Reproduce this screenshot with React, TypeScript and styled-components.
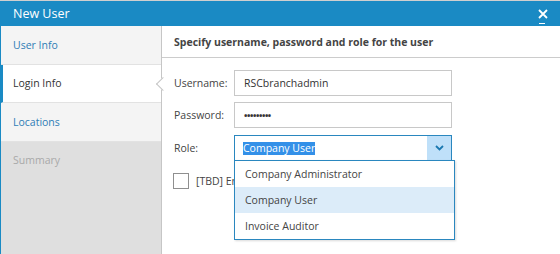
import React from "react";
import styled, { createGlobalStyle } from "styled-components";

const GlobalStyle = createGlobalStyle`
  body {
    margin: 0;
    font-family: "Open Sans", "Noto Sans", sans-serif;
    background: #ffffff;
  }
`;

const blue = "#1a8ac4";

const Dialog = styled.div`
  width: 560px;
  height: 254px;
  display: flex;
  flex-direction: column;
  border-top: 1px solid #cfcfcf;
  box-sizing: border-box;
  overflow: hidden;
`;

const TitleBar = styled.div`
  height: 25px;
  flex: none;
  background: ${blue};
  display: flex;
  align-items: center;
  justify-content: space-between;
  padding: 0 11px 0 13px;
  color: #fff;
  font-size: 12.5px;
`;

const CloseButton = styled.div`
  position: relative;
  width: 12px;
  height: 24px;
  display: flex;
  align-items: center;
  justify-content: center;
  cursor: pointer;

  &::after {
    content: "";
    position: absolute;
    left: 2px;
    bottom: 2px;
    width: 6px;
    height: 1px;
    background: #fff;
  }
`;

const Body = styled.div`
  flex: 1;
  display: flex;
  border-left: 1px solid ${blue};
`;

const Sidebar = styled.div`
  width: 160px;
  flex: none;
  background: #dfdfdf;
  border-right: 1px solid #c6c6c6;
`;

const NavItem = styled.div<{ $state: "normal" | "active" | "disabled" }>`
  height: 38.5px;
  display: flex;
  align-items: center;
  padding-left: ${(p) => (p.$state === "active" ? "10px" : "12px")};
  font-size: 10.5px;
  box-sizing: border-box;
  border-left: ${(p) => (p.$state === "active" ? `2px solid ${blue}` : "none")};
  border-bottom: 1px solid ${(p) => (p.$state === "disabled" ? "#dfdfdf" : "#e2e2e2")};
  background: ${(p) =>
    p.$state === "active" ? "#ffffff" : p.$state === "disabled" ? "#dfdfdf" : "#f4f4f4"};
  color: ${(p) =>
    p.$state === "active" ? "#333333" : p.$state === "disabled" ? "#a9a9a9" : "#2f7db6"};
`;

const Content = styled.div`
  flex: 1;
  position: relative;
  background: #fff;
`;

const Notch = styled.div`
  position: absolute;
  left: -4px;
  top: 53px;
  width: 9px;
  height: 9px;
  background: #fff;
  border-left: 1px solid #c6c6c6;
  border-bottom: 1px solid #c6c6c6;
  transform: rotate(45deg);
`;

const Header = styled.div`
  height: 31px;
  border-bottom: 1px solid #cccccc;
  display: flex;
  align-items: center;
  padding-left: 12px;
  font-size: 10.5px;
  font-weight: 700;
  color: #444;
`;

const Form = styled.div`
  padding: 12px 0 0 12px;
  display: grid;
  grid-template-columns: 60px 218px;
  row-gap: 6px;
  align-items: center;
`;

const Label = styled.div`
  font-size: 10.5px;
  color: #444;
`;

const TextBox = styled.div`
  height: 26px;
  box-sizing: border-box;
  border: 1px solid #c8c8c8;
  display: flex;
  align-items: center;
  padding-left: 9px;
  font-size: 10.5px;
  color: #333;
`;

const Dots = styled.span`
  letter-spacing: -0.4px;
  font-size: 9px;
  font-weight: 700;
  color: #333;
`;

const Select = styled.div`
  position: relative;
  height: 26px;
  margin-top: 1px;
  box-sizing: border-box;
  border: 1px solid #2a87bf;
  display: flex;
  align-items: center;
  padding-left: 8px;
  font-size: 10.5px;
`;

const Highlight = styled.span`
  background: #3390e8;
  color: #fff;
  line-height: 13px;
`;

const ArrowButton = styled.div`
  position: absolute;
  right: 0;
  top: 0;
  bottom: 0;
  width: 24px;
  background: #bfe0f9;
  display: flex;
  align-items: center;
  justify-content: center;
`;

const Menu = styled.div`
  position: absolute;
  left: -1px;
  top: 24px;
  width: 219px;
  background: #fff;
  border: 1px solid #2a87bf;
  box-shadow: 1px 1px 2px rgba(0, 0, 0, 0.15);
  z-index: 2;
`;

const MenuItem = styled.div<{ $hover?: boolean }>`
  height: 26px;
  display: flex;
  align-items: center;
  padding-left: 10px;
  font-size: 10.5px;
  color: #444;
  background: ${(p) => (p.$hover ? "#dcecf9" : "#fff")};
`;

const CheckRow = styled.div`
  grid-column: 1 / span 2;
  margin-top: 6px;
  display: flex;
  align-items: center;
  gap: 7px;
  font-size: 10.5px;
  color: #444;
`;

const Checkbox = styled.div`
  width: 16px;
  height: 16px;
  flex: none;
  box-sizing: border-box;
  border: 1px solid #8f8f8f;
  margin-left: -1px;
`;

export default function App() {
  return (
    <>
      <GlobalStyle />
      <Dialog>
        <TitleBar>
          <span>New User</span>
          <CloseButton>
            <svg width="10" height="10" viewBox="0 0 10 10">
              <path d="M1 1 L9 9 M9 1 L1 9" stroke="#fff" strokeWidth="1.8" />
            </svg>
          </CloseButton>
        </TitleBar>
        <Body>
          <Sidebar>
            <NavItem $state="normal">User Info</NavItem>
            <NavItem $state="active">Login Info</NavItem>
            <NavItem $state="normal">Locations</NavItem>
            <NavItem $state="disabled">Summary</NavItem>
          </Sidebar>
          <Content>
            <Notch />
            <Header>Specify username, password and role for the user</Header>
            <Form>
              <Label>Username:</Label>
              <TextBox>RSCbranchadmin</TextBox>
              <Label>Password:</Label>
              <TextBox>
                <Dots>•••••••••</Dots>
              </TextBox>
              <Label>Role:</Label>
              <Select>
                <Highlight>Company User</Highlight>
                <ArrowButton>
                  <svg width="9" height="6" viewBox="0 0 9 6">
                    <path d="M1 1 L4.5 4.5 L8 1" stroke="#1a78b0" strokeWidth="1.8" fill="none" />
                  </svg>
                </ArrowButton>
                <Menu>
                  <MenuItem>Company Administrator</MenuItem>
                  <MenuItem $hover>Company User</MenuItem>
                  <MenuItem>Invoice Auditor</MenuItem>
                </Menu>
              </Select>
              <CheckRow>
                <Checkbox />
                <span>[TBD] Enable user account</span>
              </CheckRow>
            </Form>
          </Content>
        </Body>
      </Dialog>
    </>
  );
}
